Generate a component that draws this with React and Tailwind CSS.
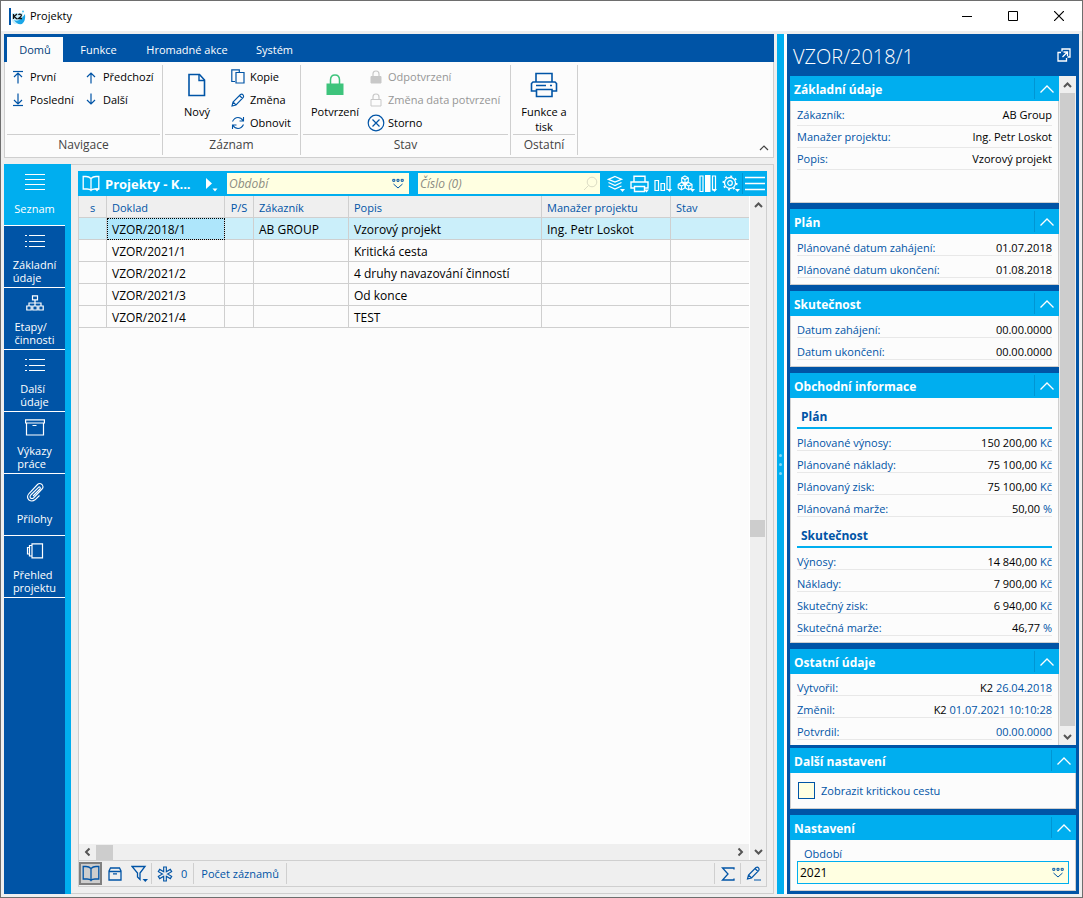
import React, { useState } from "react";

const rows = [
  { doc: "VZOR/2018/1", customer: "AB GROUP", desc: "Vzorový projekt", manager: "Ing. Petr Loskot" },
  { doc: "VZOR/2021/1", customer: "", desc: "Kritická cesta", manager: "" },
  { doc: "VZOR/2021/2", customer: "", desc: "4 druhy navazování činností", manager: "" },
  { doc: "VZOR/2021/3", customer: "", desc: "Od konce", manager: "" },
  { doc: "VZOR/2021/4", customer: "", desc: "TEST", manager: "" },
];

function Svg({ w, h, children, className = "" }) {
  return (
    <svg width={w} height={h} viewBox={`0 0 ${w} ${h}`} fill="none" stroke="currentColor" className={`shrink-0 ${className}`} aria-hidden="true">
      {children}
    </svg>
  );
}

const K2Logo = () => (
  <Svg w={17} h={17}>
    <path d="M1 0v17" stroke="#0054a6" strokeWidth="2" />
    <path d="M3 5h11v8q-3 3-8 3-3-1-3-5z" fill="#c9effc" stroke="none" />
    <path d="M5 12q5 3 11-6 1 7-3 10-5 1-8-4z" fill="#1ba7e8" stroke="none" />
    <circle cx="14" cy="3.5" r="1" fill="#4cc3f2" stroke="none" />
    <path d="M4.5 6v5M8 6L5 8.500l3 2.500M9.500 7q1-1.500 2.500-.5t-2.500 4h3.500" stroke="#111" strokeWidth="1.300" />
  </Svg>
);

const ArrowIcon = ({ down, bar }) => (
  <Svg w={12} h={14}>
    <g transform={down ? "rotate(180 6 7)" : undefined} strokeWidth="1.200">
      {bar && <path d="M1 1.500h10" />}
      <path d="M6 13.500V3M2 7l4-4 4 4" />
    </g>
  </Svg>
);

const PageIcon = () => (
  <Svg w={18} h={24}>
    <path d="M1 1.500h10.500L16.500 7v15.500H1z" strokeWidth="1.600" />
    <path d="M11 1.500V7.500h5.500" strokeWidth="1.400" />
  </Svg>
);

const CopyIcon = () => (
  <Svg w={14} h={15}>
    <path d="M4 12.500H.8V.8h7.500V3" strokeWidth="1.200" />
    <path d="M5 3.500h8v10.500H5z" strokeWidth="1.200" />
  </Svg>
);

const PencilIcon = () => (
  <Svg w={14} h={14}>
    <path d="M1 13l1-4L9.500 1.500q1.500-1 2.500.3t.3 2.500L5 12zM8.500 2.500l3 3M2 9l3 3" strokeWidth="1.100" />
  </Svg>
);

const RefreshIcon = () => (
  <Svg w={14} h={14}>
    <path d="M1.500 5.500Q3.500 1.500 7 1.500q3 0 5 3M12.500 1v4h-4M12.500 8.500q-2 4-5.500 4-3 0-5-3M1.500 13V9h4" strokeWidth="1.100" />
  </Svg>
);

const LockBig = () => (
  <Svg w={18} h={22} className="text-[#3ec47c]">
    <path d="M4.500 10V6q0-5 4.500-5t4.500 5v4" strokeWidth="1.500" />
    <path d="M.5 9.500h17v11.500H.5z" fill="currentColor" stroke="none" />
  </Svg>
);

const LockSmall = ({ filled }) => (
  <Svg w={12} h={14}>
    <path d="M3 6V4q0-3 3-3t3 3v2" strokeWidth="1.200" />
    <path d="M1 6.500h10v6.500H1z" fill={filled ? "currentColor" : "none"} />
  </Svg>
);

const StornoIcon = () => (
  <Svg w={18} h={18}>
    <circle cx="9" cy="9" r="7.800" strokeWidth="1.200" />
    <path d="M5.500 5.500l7 7M12.500 5.500l-7 7" strokeWidth="1.200" />
  </Svg>
);

const PrinterBig = () => (
  <Svg w={28} h={26}>
    <path d="M6 10V1.500h16V10M6 19H1.500v-7.500L3 10h22l1.500 1.500V19H22M6.500 17.500h15.500v7H6.500zM6 13.500h10M20 13.500h2" strokeWidth="1.600" />
  </Svg>
);

const ChevronUp = () => (
  <Svg w={14} h={8}>
    <path d="M.5 7.500L7 1l6.500 6.500" strokeWidth="1.300" />
  </Svg>
);

const LinesIcon = () => (
  <Svg w={20} h={18}>
    <path d="M0 1.500h20M0 6.500h20M0 11.500h20M0 16.500h20" />
  </Svg>
);

const ListIcon = () => (
  <Svg w={20} h={14}>
    <path d="M0 1.500h2M4 1.500h16M0 7.500h2M4 7.500h16M0 12.500h2M4 12.500h16" strokeWidth="1.200" />
  </Svg>
);

const TreeIcon = () => (
  <Svg w={18} h={16}>
    <path d="M6.500.8h5v4h-5zM9 5v3M3 11V8h12v3M9 8v3M.8 11h4.400v4H.8zM6.800 11h4.400v4H6.800zM12.800 11h4.400v4h-4.400z" strokeWidth="1.200" />
  </Svg>
);

const BoxIcon = () => (
  <Svg w={20} h={17}>
    <path d="M.6.8h18.800v3.200H.6zM1.500 4v12h17V4M7.500 6.500h4" strokeWidth="1.200" />
  </Svg>
);

const ClipIcon = () => (
  <Svg w={18} h={20}>
    <path d="M13.500 13.500L9 17.800q-3 2.200-6 .2-3-3 0-6.500L11.500 2.500q2-2 4.500 0 2 2.500 0 4.500l-8.500 9q-1.500 1-3 0-1-1.500.3-3l7.700-7.700q1-.8 1.500 0 .8.800 0 1.700L7 14" strokeWidth="1.100" />
  </Svg>
);

const OverviewIcon = () => (
  <Svg w={18} h={16}>
    <path d="M6 .8h10.500v14H6zM6 2.500H3.500v10.500H6M3.500 4.500H1.500v6.500h2" strokeWidth="1.200" />
  </Svg>
);

const BookIcon = ({ arrow }) => (
  <Svg w={18} h={17}>
    <path d="M9 3.500Q7 1.500 4 1.500H1.200v12.500H5q3 0 4 1.500 1-1.500 4-1.500h3.800V1.500H14q-3 0-5 2zM9 3.500V15" strokeWidth="1.300" />
    {arrow && <path d="M12.500 13.500h5L15 16.500z" fill="currentColor" stroke="none" />}
  </Svg>
);

const PickIcon = () => (
  <Svg w={12} h={11} className="pointer-events-none absolute right-[5px] top-1/2 -translate-y-1/2 text-[#0054a6]">
    <path d="M.8.8h2v2h-2zM5 .8h2v2H5zM9.200.8h2v2h-2zM1.500 5.500L6 9.500l4.500-4" />
  </Svg>
);

const TOOL_ARROW = <path d="M13 14h5l-2.500 3z" fill="currentColor" stroke="none" />;

const tools = [
  {
    label: "Vrstvy",
    icon: (
      <Svg w={18} h={17}>
        <path d="M8 1.500l6.500 2.800L8 7 1.500 4.300zM1.500 7.500L8 10.500l6.500-3M1.500 11L8 14l6.500-3" strokeWidth="1.300" />
        {TOOL_ARROW}
      </Svg>
    ),
  },
  {
    label: "Tisk",
    icon: (
      <Svg w={20} h={18}>
        <path d="M4 7V1.200h11V7M4 13H1V7h17v6h-3M4.500 11.500h10v5h-10z" strokeWidth="1.400" />
        <path d="M14 14.500h5l-2.500 3z" fill="currentColor" stroke="none" />
      </Svg>
    ),
  },
  {
    label: "Grafy",
    icon: (
      <Svg w={18} h={17}>
        <path d="M1 5.500h3.500v10H1zM7 8.500h3.500v7H7zM13 1.500h3v13h-3z" strokeWidth="1.200" />
        {TOOL_ARROW}
      </Svg>
    ),
  },
  {
    label: "Skupiny",
    icon: (
      <Svg w={18} h={17}>
        <path d="M8 1l3.300 1.800v3.700L8 8.300 4.700 6.500V2.800zM4.500 7.500l3.300 1.800V13l-3.300 1.800L1.200 13V9.300zM11.700 7.500L15 9.300V13l-3.300 1.800L8.400 13V9.300zM4.700 2.800L8 4.600l3.300-1.800M8 4.600v3.700M1.200 9.300l3.300 1.800 3.300-1.800M4.500 11v3.700M8.400 9.300l3.300 1.800L15 9.300M11.700 11v3.700" strokeWidth="1.100" />
        {TOOL_ARROW}
      </Svg>
    ),
  },
  {
    label: "Sloupce",
    icon: (
      <Svg w={18} h={18}>
        <path d="M1 1h3v15.500H1zM13.500 1h3v14h-3z" strokeWidth="1.200" />
        <path d="M6 0h5.500v17H6z" fill="currentColor" stroke="none" />
        {TOOL_ARROW}
      </Svg>
    ),
  },
  {
    label: "Nastavení seznamu",
    icon: (
      <Svg w={18} h={17}>
        <circle cx="8" cy="8" r="5.500" strokeWidth="1.300" />
        <circle cx="8" cy="8" r="2.300" strokeWidth="1.200" />
        <circle cx="8" cy="8" r="6.800" strokeWidth="1.500" strokeDasharray="2 3.340" />
        {TOOL_ARROW}
      </Svg>
    ),
  },
];

const modules = [
  { label: ["Seznam"], icon: <LinesIcon /> },
  { label: ["Základní", "údaje"], icon: <ListIcon /> },
  { label: ["Etapy/", "činnosti"], icon: <TreeIcon /> },
  { label: ["Další", "údaje"], icon: <ListIcon /> },
  { label: ["Výkazy", "práce"], icon: <BoxIcon /> },
  { label: ["Přílohy"], icon: <ClipIcon /> },
  { label: ["Přehled", "projektu"], icon: <OverviewIcon /> },
];

function ScrollArrow({ dir }) {
  const turn = { up: "", right: "rotate-90", down: "rotate-180", left: "-rotate-90" }[dir];
  return (
    <button aria-label={`scroll ${dir}`} className="flex h-[17px] w-[17px] shrink-0 items-center justify-center text-[#555]">
      <Svg w={9} h={6} className={turn}>
        <path d="M1 5l3.500-3.500L8 5" strokeWidth="2" />
      </Svg>
    </button>
  );
}

function RibbonGroup({ title, children }) {
  return (
    <div className="flex flex-col border-r border-[#cfcfcf] px-[2px]">
      <div className="flex h-[70px] border-b border-[#cfcfcf]">{children}</div>
      <div className="flex h-5 items-center justify-center text-[12px] text-[#444]">{title}</div>
    </div>
  );
}

function SmallButton({ icon, children, disabled }) {
  return (
    <button
      disabled={disabled}
      className="flex h-[23px] items-center gap-[3px] whitespace-nowrap text-black disabled:text-[#969696]"
    >
      <span className={`flex w-[18px] justify-center ${disabled ? "text-[#c8c8c8]" : "text-[#0054a6]"}`}>{icon}</span>
      {children}
    </button>
  );
}

function BigButton({ icon, children }) {
  return (
    <button className="flex flex-col items-center leading-[15px] text-black">
      <span className="flex h-[39px] items-center text-[#0054a6]">{icon}</span>
      {children}
    </button>
  );
}

function Ribbon() {
  return (
    <div>
      <nav className="flex h-7 bg-[#0054a6] pt-[3px] pl-[3px] text-white">
        <button className="w-14 bg-[#fcfcfc] text-[#003c78]">Domů</button>
        <button className="w-[71px]">Funkce</button>
        <button className="w-[106px]">Hromadné akce</button>
        <button className="w-[69px]">Systém</button>
      </nav>
      <div className="flex h-24 border border-t-0 border-[#cfcfcf] bg-[#fcfcfc] pt-[3px] pb-[2px]">
        <RibbonGroup title="Navigace">
          <div className="w-[75px] pl-[2px]">
            <SmallButton icon={<ArrowIcon bar />}>První</SmallButton>
            <SmallButton icon={<ArrowIcon down bar />}>Poslední</SmallButton>
          </div>
          <div className="w-[78px]">
            <SmallButton icon={<ArrowIcon />}>Předchozí</SmallButton>
            <SmallButton icon={<ArrowIcon down />}>Další</SmallButton>
          </div>
        </RibbonGroup>
        <RibbonGroup title="Záznam">
          <div className="flex w-16 justify-center">
            <BigButton icon={<PageIcon />}>Nový</BigButton>
          </div>
          <div className="w-[69px]">
            <SmallButton icon={<CopyIcon />}>Kopie</SmallButton>
            <SmallButton icon={<PencilIcon />}>Změna</SmallButton>
            <SmallButton icon={<RefreshIcon />}>Obnovit</SmallButton>
          </div>
        </RibbonGroup>
        <RibbonGroup title="Stav">
          <div className="flex w-16 justify-center">
            <BigButton icon={<LockBig />}>Potvrzení</BigButton>
          </div>
          <div className="w-[141px]">
            <SmallButton disabled icon={<LockSmall filled />}>Odpotvrzení</SmallButton>
            <SmallButton disabled icon={<LockSmall />}>Změna data potvrzení</SmallButton>
            <SmallButton icon={<StornoIcon />}>Storno</SmallButton>
          </div>
        </RibbonGroup>
        <RibbonGroup title="Ostatní">
          <div className="flex w-[62px] justify-center">
            <BigButton icon={<PrinterBig />}>
              Funkce a<br />tisk
            </BigButton>
          </div>
        </RibbonGroup>
        <button aria-label="Sbalit pás" className="mr-1 mb-1 ml-auto self-end text-[#444]">
          <Svg w={10} h={6}>
            <path d="M1 5l4-4 4 4" strokeWidth="1.200" />
          </Svg>
        </button>
      </div>
    </div>
  );
}

function Sidebar() {
  return (
    <nav className="w-[67px] shrink-0 border-r-[6px] border-[#00aeef] bg-[#0054a6] leading-[13px] text-white">
      {modules.map((m, i) => (
        <button
          key={m.label.join(" ")}
          className={`flex h-[62px] w-full flex-col items-center border-b border-white ${i === 0 ? "bg-[#00aeef]" : ""}`}
        >
          <span className={`flex h-[30px] items-center ${m.label.length === 1 ? "pt-[6px]" : ""}`}>{m.icon}</span>
          <span className="flex h-[29px] flex-col justify-center text-left">
            {m.label.map((line) => (
              <span key={line}>{line}</span>
            ))}
          </span>
        </button>
      ))}
    </nav>
  );
}

function GridToolbar() {
  return (
    <div className="flex h-[25px] items-center bg-[#00aeef] pr-[2px] pl-1 text-white">
      <button aria-label="Kniha">
        <BookIcon arrow />
      </button>
      <span className="ml-[5px] w-[98px] truncate text-[13px] font-bold">Projekty - K...</span>
      <button aria-label="Spustit" className="mr-2 ml-[2px]">
        <Svg w={14} h={16}>
          <path d="M1 2l6 5.500L1 13zM7.500 12.500h5l-2.500 3z" fill="currentColor" stroke="none" />
        </Svg>
      </button>
      <div className="relative h-[21px] flex-1">
        <select aria-label="Období" className="h-full w-full appearance-none bg-[#ffffe1] px-[2px] text-[12px] text-[#8c8c82] italic">
          <option>Období</option>
        </select>
        <PickIcon />
      </div>
      <div className="relative ml-[9px] h-[21px] flex-1">
        <input
          aria-label="Číslo"
          placeholder="Číslo (0)"
          className="block h-full w-full bg-[#ffffe1] px-[2px] text-[12px] italic placeholder:text-[#8c8c82]"
        />
        <Svg w={15} h={15} className="absolute top-[3px] right-[2px] text-[#dcdcc4]">
          <circle cx="9" cy="6" r="4.800" />
          <path d="M5.500 9.500L1 14" />
        </Svg>
      </div>
      <div className="flex w-[141px] items-center justify-between pr-[1px] pl-[7px]">
        {tools.map((t) => (
          <button key={t.label} aria-label={t.label}>
            {t.icon}
          </button>
        ))}
      </div>
      <button aria-label="Nabídka" className="ml-[1px] border-l border-[#0095d3] pl-[2px]">
        <Svg w={20} h={21}>
          <path d="M0 4.500h20M0 10.500h20M0 16.500h20" strokeWidth="1.400" />
        </Svg>
      </button>
    </div>
  );
}

function ProjectTable() {
  const [selected, setSelected] = useState(0);
  const cell = "truncate border-r border-b border-[#cfcfcf] px-[5px] pt-[2px] last:border-r-0";

  return (
    <table className="w-full table-fixed border-separate border-spacing-0 text-left">
      <colgroup>
        <col className="w-7" />
        <col className="w-[118px]" />
        <col className="w-[29px]" />
        <col className="w-[95px]" />
        <col className="w-[193px]" />
        <col className="w-[129px]" />
        <col />
      </colgroup>
      <thead>
        <tr className="h-[22px] bg-[#efefef] text-[#0054a6]">
          <th className={`${cell} text-center font-normal`}>s</th>
          <th className={`${cell} font-normal`}>Doklad</th>
          <th className="border-r border-b border-[#cfcfcf] pt-[2px] text-center font-normal">P/S</th>
          <th className={`${cell} font-normal`}>Zákazník</th>
          <th className={`${cell} font-normal`}>Popis</th>
          <th className={`${cell} font-normal`}>Manažer projektu</th>
          <th className={`${cell} font-normal`}>Stav</th>
        </tr>
      </thead>
      <tbody className="text-[12px] text-black">
        {rows.map((row, i) => (
          <tr key={row.doc} onClick={() => setSelected(i)} className={`h-[22px] ${i === selected ? "bg-[#cbeffa]" : ""}`}>
            <td className={cell}></td>
            <td className={`${cell} ${i === selected ? "bg-[#aee6fb] outline-1 -outline-offset-1 outline-black outline-dotted" : ""}`}>
              {row.doc}
            </td>
            <td className={cell}></td>
            <td className={cell}>{row.customer}</td>
            <td className={cell}>{row.desc}</td>
            <td className={cell}>{row.manager}</td>
            <td className={cell}></td>
          </tr>
        ))}
      </tbody>
    </table>
  );
}

function StatusBar() {
  return (
    <div className="flex h-[26px] items-center border-t border-[#cfcfcf] text-[#0054a6]">
      <button aria-label="Kniha" className="flex h-[23px] w-[23px] items-center justify-center border-2 border-[#808080] bg-[#cdcdcd]">
        <BookIcon />
      </button>
      <button aria-label="Archiv" className="ml-[6px]">
        <Svg w={14} h={14}>
          <path d="M1 4L2.500 1h9L13 4v9H1zM1 4.500h12M5 6.800h4" strokeWidth="1.300" />
        </Svg>
      </button>
      <button aria-label="Filtr" className="ml-[9px]">
        <Svg w={18} h={18}>
          <path d="M1 1.500h13L9 8v6.500L6.500 12V8z" strokeWidth="1.300" />
          <path d="M11.500 14h5.500l-2.700 3z" fill="currentColor" stroke="none" />
        </Svg>
      </button>
      <span className="mr-[5px] h-[21px] border-r border-[#cfcfcf] pl-[2px]" />
      <button aria-label="Označené" className="flex items-center gap-2">
        <Svg w={16} h={16}>
          <path d="M8 .5v15M1.500 4.200l13 7.600M14.500 4.200l-13 7.600" strokeWidth="3.800" />
          <path d="M8 1.500v13M2.500 4.800l11 6.400M13.500 4.800l-11 6.400" stroke="#efefef" strokeWidth="1.500" />
        </Svg>
        0
      </button>
      <button className="mx-[6px] h-[21px] border-x border-[#cfcfcf] px-[7px]">Počet záznamů</button>
      <div className="ml-auto flex h-[21px] items-center">
        <button aria-label="Součet" className="flex h-full w-[26px] items-center justify-center border-l border-[#cfcfcf]">
          <Svg w={14} h={14}>
            <path d="M13 2.500V1H1.500L7 7l-5.500 6H13v-1.500" strokeWidth="1.300" />
          </Svg>
        </button>
        <button aria-label="Upravit" className="flex h-full w-[26px] items-center justify-center border-l border-[#cfcfcf]">
          <Svg w={16} h={15}>
            <path d="M1.500 13l1-4L10 1.500q1.500-1 2.500.3t.3 2.500L5.500 12zM9 2.500l3 3M2.500 9l3 3M8 14h7" strokeWidth="1.200" />
          </Svg>
        </button>
      </div>
    </div>
  );
}

function Browser() {
  return (
    <div className="flex min-w-0 flex-1 flex-col border border-l-0 border-[#cfcfcf] p-[7px] pt-[6px] pr-[6px] pb-[6px]">
      <GridToolbar />
      <div className="flex flex-1 flex-col border border-t-0 border-[#cfcfcf]">
        <div className="flex flex-1">
          <div className="flex min-w-0 flex-1 flex-col bg-[#fcfcfc]">
            <div className="flex-1">
              <ProjectTable />
            </div>
            <div className="flex h-4 items-center bg-[#efefef]">
              <ScrollArrow dir="left" />
              <span className="h-[15px] w-[17px] bg-[#cdcdcd]" />
              <span className="flex-1" />
              <ScrollArrow dir="right" />
            </div>
          </div>
          <div className="flex w-[17px] shrink-0 flex-col border-l border-white bg-[#efefef]">
            <ScrollArrow dir="up" />
            <span className="flex-1" />
            <span className="h-[17px] w-[15px] bg-[#cdcdcd]" />
            <span className="h-[306px]" />
            <ScrollArrow dir="down" />
          </div>
        </div>
        <StatusBar />
      </div>
    </div>
  );
}

function Section({ title, children, className = "" }) {
  const [open, setOpen] = useState(true);
  return (
    <section>
      <h2>
        <button
          onClick={() => setOpen(!open)}
          aria-expanded={open}
          className="flex h-[25px] w-full items-center justify-between bg-[#00aeef] pl-1 text-[12px] font-bold text-white"
        >
          <span className="pt-[2px]">{title}</span>
          <span className="flex h-[21px] w-[25px] items-center justify-center border-l border-[#0095d3]">
            <ChevronUp />
          </span>
        </button>
      </h2>
      {open && <div className={`border border-t-0 border-[#cfcfcf] bg-[#fcfcfc] px-[6px] ${className}`}>{children}</div>}
    </section>
  );
}

function Field({ label, value, unit, pre, centered }) {
  return (
    <div
      className={`flex h-[22px] items-center justify-between border-b border-[#e8e8e8] text-[#0054a6] ${centered ? "pt-[1px]" : "pt-[6px]"}`}
    >
      <span>{label}:</span>
      <span>
        {pre && <span className="text-black">{pre} </span>}
        <span className={pre === undefined ? "text-black" : ""}>{value}</span>
        {unit && ` ${unit}`}
      </span>
    </div>
  );
}

function SubHeading({ children }) {
  return (
    <h3 className="flex h-[31px] items-center border-b-2 border-[#00aeef] pt-2 pl-1 text-[12px] font-bold text-[#0054a6]">{children}</h3>
  );
}

function DetailPanel() {
  return (
    <aside className="flex w-[292px] shrink-0 flex-col bg-[#0054a6] px-[3px] pb-[3px]">
      <header className="flex h-[42px] items-center justify-between pr-[5px] pl-[3px] text-white">
        <h1 className="pt-1 text-[20px] font-light">VZOR/2018/1</h1>
        <button aria-label="Otevřít v novém okně">
          <Svg w={14} h={14}>
            <path d="M5 3.500V1h8v8h-2.500M4 4.500H1V13h8.500v-3M5.500 9l5-5M6.500 4H10.500V8" strokeWidth="1.300" />
          </Svg>
        </button>
      </header>

      <div className="flex flex-1">
        <div className="flex min-w-0 flex-1 flex-col gap-[6px]">
          <Section title="Základní údaje" className="min-h-[102px] pt-[3px]">
            <Field centered label="Zákazník" value="AB Group" />
            <Field centered label="Manažer projektu" value="Ing. Petr Loskot" />
            <Field centered label="Popis" value="Vzorový projekt" />
          </Section>
          <Section title="Plán" className="pb-[6px]">
            <Field label="Plánované datum zahájení" value="01.07.2018" />
            <Field label="Plánované datum ukončení" value="01.08.2018" />
          </Section>
          <Section title="Skutečnost" className="pb-[6px]">
            <Field label="Datum zahájení" value="00.00.0000" />
            <Field label="Datum ukončení" value="00.00.0000" />
          </Section>
          <Section title="Obchodní informace" className="pb-[6px]">
            <SubHeading>Plán</SubHeading>
            <Field label="Plánované výnosy" value="150 200,00" unit="Kč" />
            <Field label="Plánované náklady" value="75 100,00" unit="Kč" />
            <Field label="Plánovaný zisk" value="75 100,00" unit="Kč" />
            <Field label="Plánovaná marže" value="50,00" unit="%" />
            <SubHeading>Skutečnost</SubHeading>
            <Field label="Výnosy" value="14 840,00" unit="Kč" />
            <Field label="Náklady" value="7 900,00" unit="Kč" />
            <Field label="Skutečný zisk" value="6 940,00" unit="Kč" />
            <Field label="Skutečná marže" value="46,77" unit="%" />
          </Section>
          <Section title="Ostatní údaje" className="border-b-0 pb-[5px]">
            <Field label="Vytvořil" pre="K2" value="26.04.2018" />
            <Field label="Změnil" pre="K2" value="01.07.2021 10:10:28" />
            <Field label="Potvrdil" pre="" value="00.00.0000" />
          </Section>
        </div>
        <div className="flex w-[17px] shrink-0 flex-col bg-[#efefef]">
          <ScrollArrow dir="up" />
          <span className="ml-[1px] w-[15px] flex-1 bg-[#cdcdcd]" />
          <span className="h-[2px]" />
          <ScrollArrow dir="down" />
        </div>
      </div>

      <div className="flex flex-col gap-[6px] pt-[3px]">
        <Section title="Další nastavení" className="py-[9px]">
          <label className="flex h-[17px] items-center gap-[6px] pl-[1px] text-[#0054a6]">
            <input type="checkbox" className="h-[17px] w-[17px] appearance-none border border-[#0054a6] bg-[#ffffe1]" />
            Zobrazit kritickou cestu
          </label>
        </Section>
        <Section title="Nastavení" className="pt-[6px] pb-[6px]">
          <label htmlFor="period" className="block h-[15px] pl-[7px] leading-[16px] text-[#0054a6]">
            Období
          </label>
          <div className="relative h-[23px]">
            <select id="period" className="h-full w-full appearance-none border border-[#00aeef] bg-[#ffffe1] px-[2px] text-[12px] text-black">
              <option>2021</option>
            </select>
            <PickIcon />
          </div>
        </Section>
      </div>
    </aside>
  );
}

export default function App() {
  return (
    <div className="flex min-h-screen flex-col border border-[#6e6e6e] bg-[#efefef] font-['Open_Sans','Noto_Sans',sans-serif] text-[11px] leading-4">
      <header className="flex h-[30px] items-center bg-white pl-2 text-black">
        <K2Logo />
        <span className="ml-1 flex-1">Projekty</span>
        <button aria-label="Minimalizovat" className="flex w-[46px] justify-center">
          <Svg w={10} h={10}>
            <path d="M0 5.500h10" />
          </Svg>
        </button>
        <button aria-label="Maximalizovat" className="flex w-[46px] justify-center">
          <Svg w={10} h={10}>
            <path d="M.5.5h9v9h-9z" />
          </Svg>
        </button>
        <button aria-label="Zavřít" className="flex w-[46px] justify-center">
          <Svg w={10} h={10}>
            <path d="M0 0l10 10M10 0L0 10" strokeWidth="1.200" />
          </Svg>
        </button>
      </header>

      <div className="flex flex-1 p-[3px]">
        <main className="flex min-w-0 flex-1 flex-col">
          <Ribbon />
          <div className="mt-[6px] flex flex-1">
            <Sidebar />
            <Browser />
          </div>
        </main>
        <div className="ml-[3px] flex w-[7px] shrink-0 flex-col items-center justify-center gap-[6px] bg-[#00aeef]">
          <span className="h-[3px] w-[3px] rounded-full bg-[#7fd6f7]" />
          <span className="h-[3px] w-[3px] rounded-full bg-[#7fd6f7]" />
          <span className="h-[3px] w-[3px] rounded-full bg-[#7fd6f7]" />
        </div>
        <div className="w-[3px] shrink-0 bg-white" />
        <DetailPanel />
      </div>
    </div>
  );
}
